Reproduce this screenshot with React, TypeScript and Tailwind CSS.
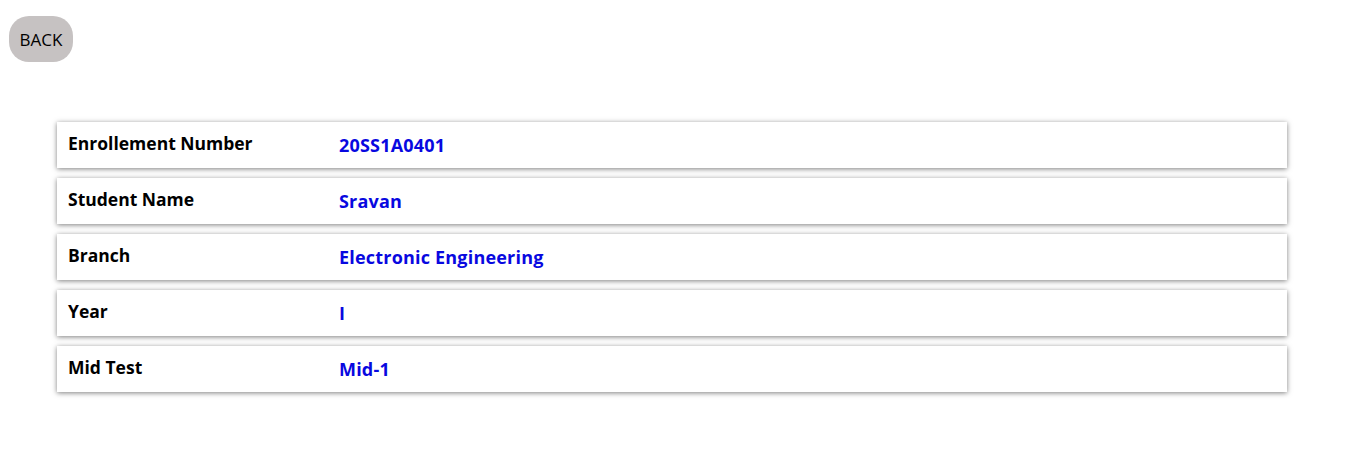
const rows = [
  { label: 'Enrollement Number', value: '20SS1A0401' },
  { label: 'Student Name', value: 'Sravan' },
  { label: 'Branch', value: 'Electronic Engineering' },
  { label: 'Year', value: 'I' },
  { label: 'Mid Test', value: 'Mid-1' },
];

export default function App() {
  return (
    <div className="min-h-screen bg-white" style={{ fontFamily: '"Open Sans", sans-serif' }}>
      <div className="pl-[9px] pt-[16px]">
        <button className="h-[46px] w-[64px] rounded-[20px] bg-[#c6c2c2] text-[17px] leading-none text-black">
          BACK
        </button>
      </div>

      <div className="ml-[57px] mt-[60px] flex w-[1230px] flex-col gap-[10px]">
        {rows.map((row) => (
          <div
            key={row.label}
            className="flex h-[46px] bg-white shadow-[0_1px_5px_rgba(0,0,0,0.5)]"
          >
            <div className="w-[282px] pl-[11px] pt-[9px] text-[17.5px] leading-[24px] font-bold text-black">
              {row.label}
            </div>
            <div className="pt-[11px] text-[18px] leading-[24px] font-bold tracking-[0.2px] text-[#0808e0]">
              {row.value}
            </div>
          </div>
        ))}
      </div>
    </div>
  );
}
